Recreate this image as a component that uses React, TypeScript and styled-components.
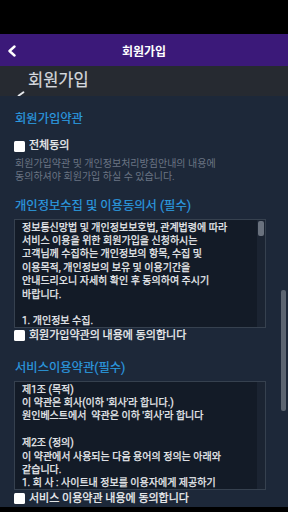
import styled, { createGlobalStyle } from 'styled-components';

const GlobalStyle = createGlobalStyle`
    html, body {
        margin: 0;
        padding: 0;
        background: #000;
    }
    body {
        font-family: Roboto, "Noto Sans CJK KR", sans-serif;
        -webkit-font-smoothing: antialiased;
    }
    * {
        box-sizing: border-box;
    }
`;

const privacyLines = [
    '정보통신망법 및 개인정보보호법, 관계법령에 따라',
    '서비스 이용을 위한 회원가입을 신청하시는',
    '고객님께 수집하는 개인정보의 항목, 수집 및',
    '이용목적, 개인정보의 보유 및 이용기간을',
    '안내드리오니 자세히 확인 후 동의하여 주시기',
    '바랍니다.',
    '',
    '1. 개인정보 수집.',
];

const serviceLines = [
    '제1조 (목적)',
    "이 약관은 회사(이하 '회사'라 합니다.)",
    "원인베스트에서  약관은 이하 '회사'라 합니다",
    '',
    '제2조 (정의)',
    '이 약관에서 사용되는 다음 용어의 정의는 아래와',
    '같습니다.',
    '1. 회 사 : 사이트내 정보를 이용자에게 제공하기',
];

interface TermsBoxProps {
    lines: string[];
    showThumb?: boolean;
}

const TermsBox = ({ lines, showThumb }: TermsBoxProps) => (
    <StyledTermsBox>
        <TermsText>
            {lines.map((line, i) => (
                <TermsLine key={i}>{line || '\u00a0'}</TermsLine>
            ))}
        </TermsText>
        <BoxTrack>{showThumb && <BoxThumb />}</BoxTrack>
    </StyledTermsBox>
);

const AgreeCheck = ({ label, top }: { label: string; top: number }) => (
    <CheckRow $top={top}>
        <CheckBox />
        <CheckLabel>{label}</CheckLabel>
    </CheckRow>
);

const App = () => {
    return (
        <>
            <GlobalStyle />
            <Screen>
                <StatusBar />
                <Header>
                    <BackButton>
                        <svg width="10" height="12" viewBox="0 0 10 12">
                            <polyline
                                points="7.5,1.5 2.5,6 7.5,10.5"
                                fill="none"
                                stroke="#fff"
                                strokeWidth="2.4"
                                strokeLinecap="round"
                                strokeLinejoin="round"
                            />
                        </svg>
                    </BackButton>
                    <HeaderTitle>회원가입</HeaderTitle>
                    <span />
                </Header>
                <TitleBar>
                    <TitleMark />
                    회원가입
                </TitleBar>
                <Content>
                    <SectionTitle $top={15}>회원가입약관</SectionTitle>
                    <AgreeCheck label="전체동의" top={12} />
                    <Notice>
                        회원가입약관 및 개인정보처리방침안내의 내용에
                        <br />
                        동의하셔야 회원가입 하실 수 있습니다.
                    </Notice>
                    <SectionTitle $top={15}>개인정보수집 및 이용동의서 (필수)</SectionTitle>
                    <TermsBox lines={privacyLines} showThumb />
                    <AgreeCheck label="회원가입약관의 내용에 동의합니다" top={1} />
                    <SectionTitle $top={17}>서비스이용약관(필수)</SectionTitle>
                    <TermsBox lines={serviceLines} />
                    <AgreeCheck label="서비스 이용약관 내용에 동의합니다" top={2} />
                    <PageThumb />
                </Content>
            </Screen>
        </>
    );
};

const Screen = styled.div`
    width: 288px;
    height: 512px;
    display: flex;
    flex-direction: column;
    background: #000;
    overflow: hidden;
`;

const StatusBar = styled.div`
    height: 34px;
    flex-shrink: 0;
    background: #000;
`;

const Header = styled.div`
    height: 32px;
    flex-shrink: 0;
    display: grid;
    grid-template-columns: 40px 1fr 40px;
    align-items: center;
    background: #3b1979;
`;

const BackButton = styled.div`
    display: flex;
    align-items: center;
    padding-left: 7px;
    padding-top: 1px;
`;

const HeaderTitle = styled.div`
    text-align: center;
    color: #fff;
    font-size: 12px;
    font-weight: bold;
`;

const TitleBar = styled.div`
    height: 30px;
    flex-shrink: 0;
    display: flex;
    align-items: center;
    padding-left: 17px;
    background: #262a31;
    color: #d6d9de;
    font-size: 16.5px;
    -webkit-text-stroke: 0.2px #d6d9de;
    line-height: 1;
`;

const TitleMark = styled.span`
    align-self: flex-end;
    flex-shrink: 0;
    width: 8px;
    height: 2px;
    margin: 0 3px 1px 0;
    background: #e6e8ec;
    border-radius: 1px;
    transform: rotate(-36deg);
`;

const Content = styled.div`
    position: relative;
    height: 411px;
    flex-shrink: 0;
    display: flex;
    flex-direction: column;
    padding: 0 22px 0 14px;
    background: #1d2839;
    overflow: hidden;
`;

const SectionTitle = styled.div<{ $top: number }>`
    margin-top: ${({ $top }) => $top}px;
    padding-left: 1px;
    color: #2c9ce0;
    font-size: 12.3px;
    -webkit-text-stroke: 0.2px #2c9ce0;
    line-height: 16px;
`;

const CheckRow = styled.div<{ $top: number }>`
    margin-top: ${({ $top }) => $top}px;
    display: flex;
    align-items: center;
    gap: 4px;
    height: 14px;
`;

const CheckBox = styled.span`
    width: 11px;
    height: 11px;
    flex-shrink: 0;
    background: #fff;
    border-radius: 1.5px;
`;

const CheckLabel = styled.span`
    color: #f2f3f5;
    font-size: 11px;
    -webkit-text-stroke: 0.25px #f2f3f5;
    line-height: 14px;
`;

const Notice = styled.div`
    margin-top: 3.5px;
    padding-left: 1px;
    color: #6b7584;
    font-size: 10px;
    line-height: 13px;
`;

const StyledTermsBox = styled.div`
    margin-top: 5px;
    height: 109px;
    flex-shrink: 0;
    display: flex;
    background: #131b27;
    border: 1px solid #36414f;
`;

const TermsText = styled.div`
    flex: 1;
    padding: 1px 0 0 7px;
    overflow: hidden;
`;

const TermsLine = styled.div`
    color: #eceef1;
    font-size: 10px;
    -webkit-text-stroke: 0.25px #eceef1;
    line-height: 13.4px;
    white-space: pre;
`;

const BoxTrack = styled.div`
    width: 8px;
    flex-shrink: 0;
    padding: 1px 1px 0 1px;
    background: #1b2432;
`;

const BoxThumb = styled.div`
    height: 15px;
    background: #6a727e;
    border-radius: 2px;
`;

const PageThumb = styled.div`
    position: absolute;
    right: 2px;
    top: 194px;
    width: 5px;
    height: 121px;
    background: #5c6571;
    border-radius: 2px;
`;

export default App;
